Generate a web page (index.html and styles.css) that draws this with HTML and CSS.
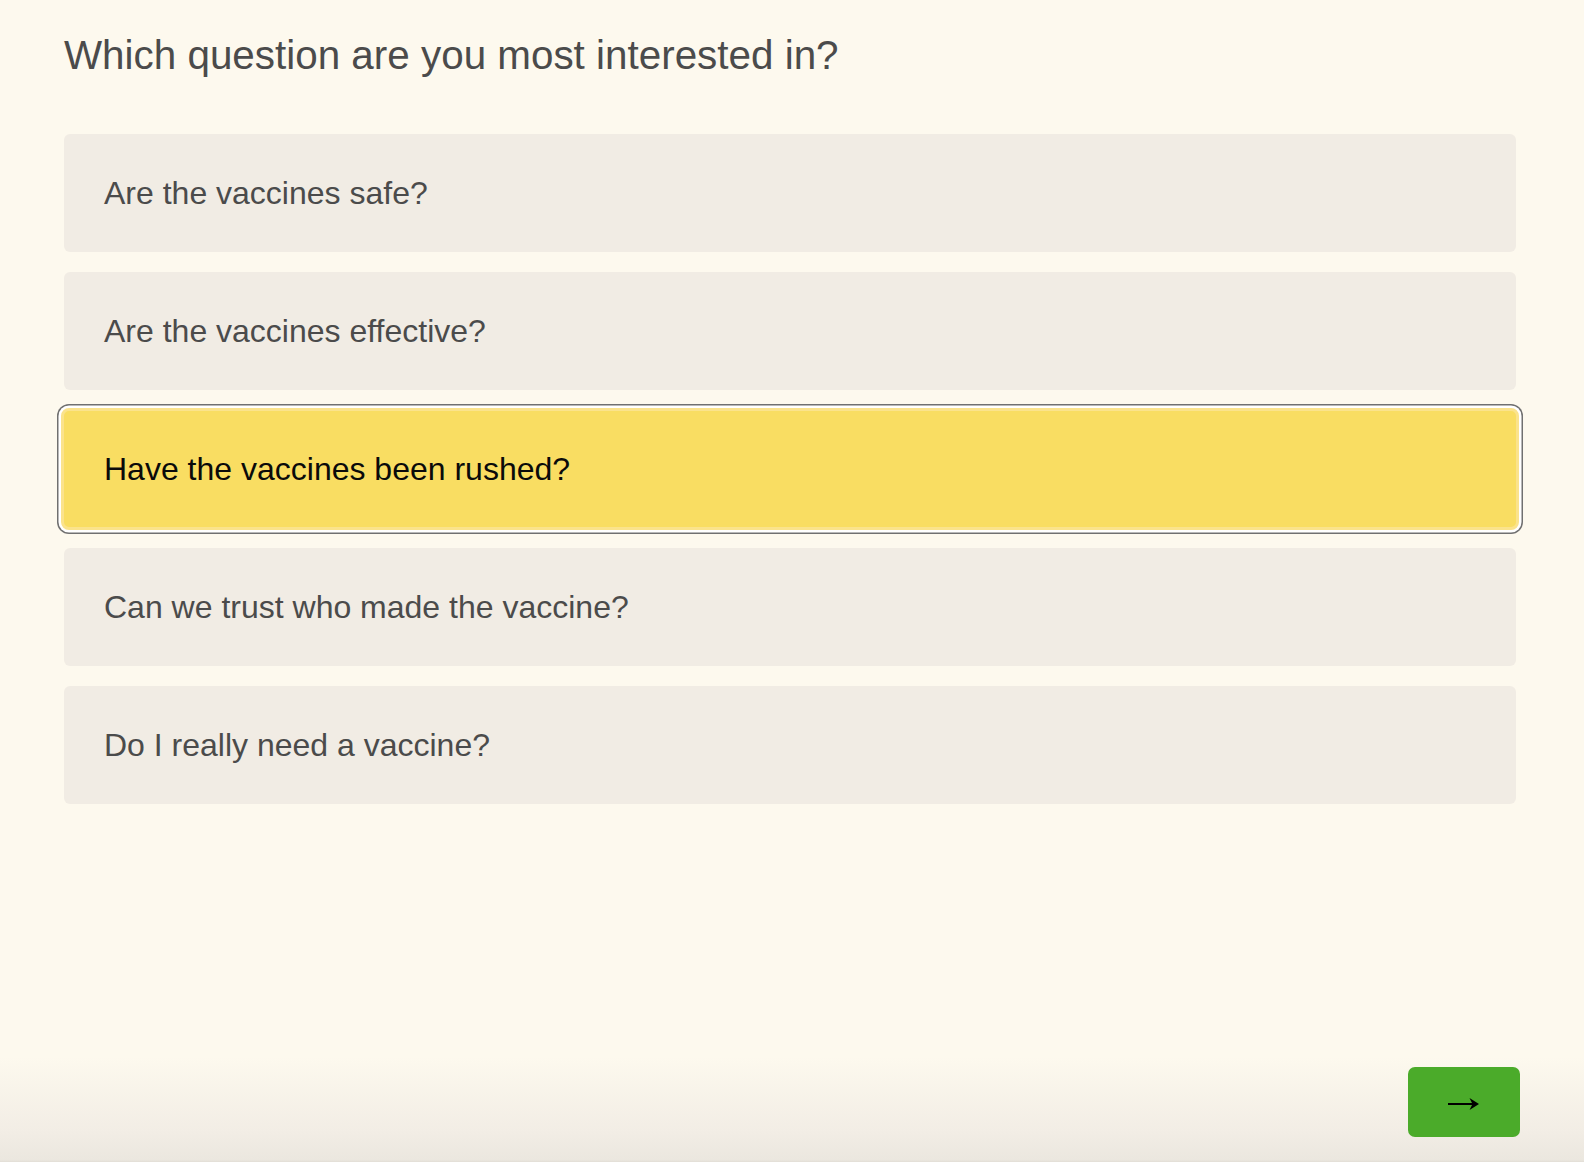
FILE: index.html
```html
<!DOCTYPE html>
<html lang="en">
<head>
<meta charset="utf-8">
<title>Which question are you most interested in?</title>
<link rel="stylesheet" href="styles.css">
</head>
<body>
<main class="page">
  <h1 class="title">Which question are you most interested in?</h1>
  <ul class="options">
    <li class="option">Are the vaccines safe?</li>
    <li class="option">Are the vaccines effective?</li>
    <li class="option option--selected">Have the vaccines been rushed?</li>
    <li class="option">Can we trust who made the vaccine?</li>
    <li class="option">Do I really need a vaccine?</li>
  </ul>
  <footer class="footer">
    <button class="next" type="button" aria-label="Next">
      <svg class="next__icon" width="32" height="14" viewBox="0 0 32 14" aria-hidden="true">
        <path d="M0 7 H27" stroke="#000" stroke-width="2" fill="none"/>
        <path d="M31 7 L21.5 1 L24.5 7 L21.5 13 Z" fill="#000"/>
      </svg>
    </button>
  </footer>
</main>
</body>
</html>
```
FILE: styles.css
```css
html {
  margin: 0;
  padding: 0;
  background: #fdf9ee;
}

body {
  margin: 0;
  padding: 0;
  min-height: 100vh;
  font-family: "Liberation Sans", Arial, Helvetica, sans-serif;
  color: #4b4b4b;
  background: linear-gradient(to bottom, #fdf9ee 0, #fdf9ee calc(100% - 105px), #f2ede5 calc(100% - 30px), #ebe7df calc(100% - 2px), #e2ded6 100%);
}

.page {
  box-sizing: border-box;
  min-height: 100vh;
  padding: 31px 64px 25px;
  display: flex;
  flex-direction: column;
}

.title {
  margin: 0;
  font-size: 40.4px;
  line-height: 48px;
  font-weight: 400;
  color: #4b4b4b;
}

.options {
  list-style: none;
  margin: 55px 4px 0 0;
  padding: 0;
  display: flex;
  flex-direction: column;
  gap: 20px;
}

.option {
  box-sizing: border-box;
  height: 118px;
  padding: 0 40px;
  display: flex;
  align-items: center;
  background: #f1ece4;
  border-radius: 6px;
  font-size: 32px;
  color: #4b4b4b;
}

.option--selected {
  height: 122px;
  margin: -2px -3px;
  padding: 0 40px;
  border: 3px solid #fbe38c;
  background: #f9dd62;
  color: #0a0a0a;
  border-radius: 8px;
  box-shadow: 0 0 0 2.5px #ffffff, 0 0 0 4px #707070;
}

.footer {
  margin-top: auto;
  display: flex;
  justify-content: flex-end;
}

.next {
  width: 112px;
  height: 70px;
  border: 0;
  border-radius: 7px;
  background: #4bab2a;
  display: flex;
  align-items: center;
  justify-content: center;
  padding: 0;
  cursor: pointer;
}

.next__icon {
  display: block;
  margin-top: 4px;
}
```
